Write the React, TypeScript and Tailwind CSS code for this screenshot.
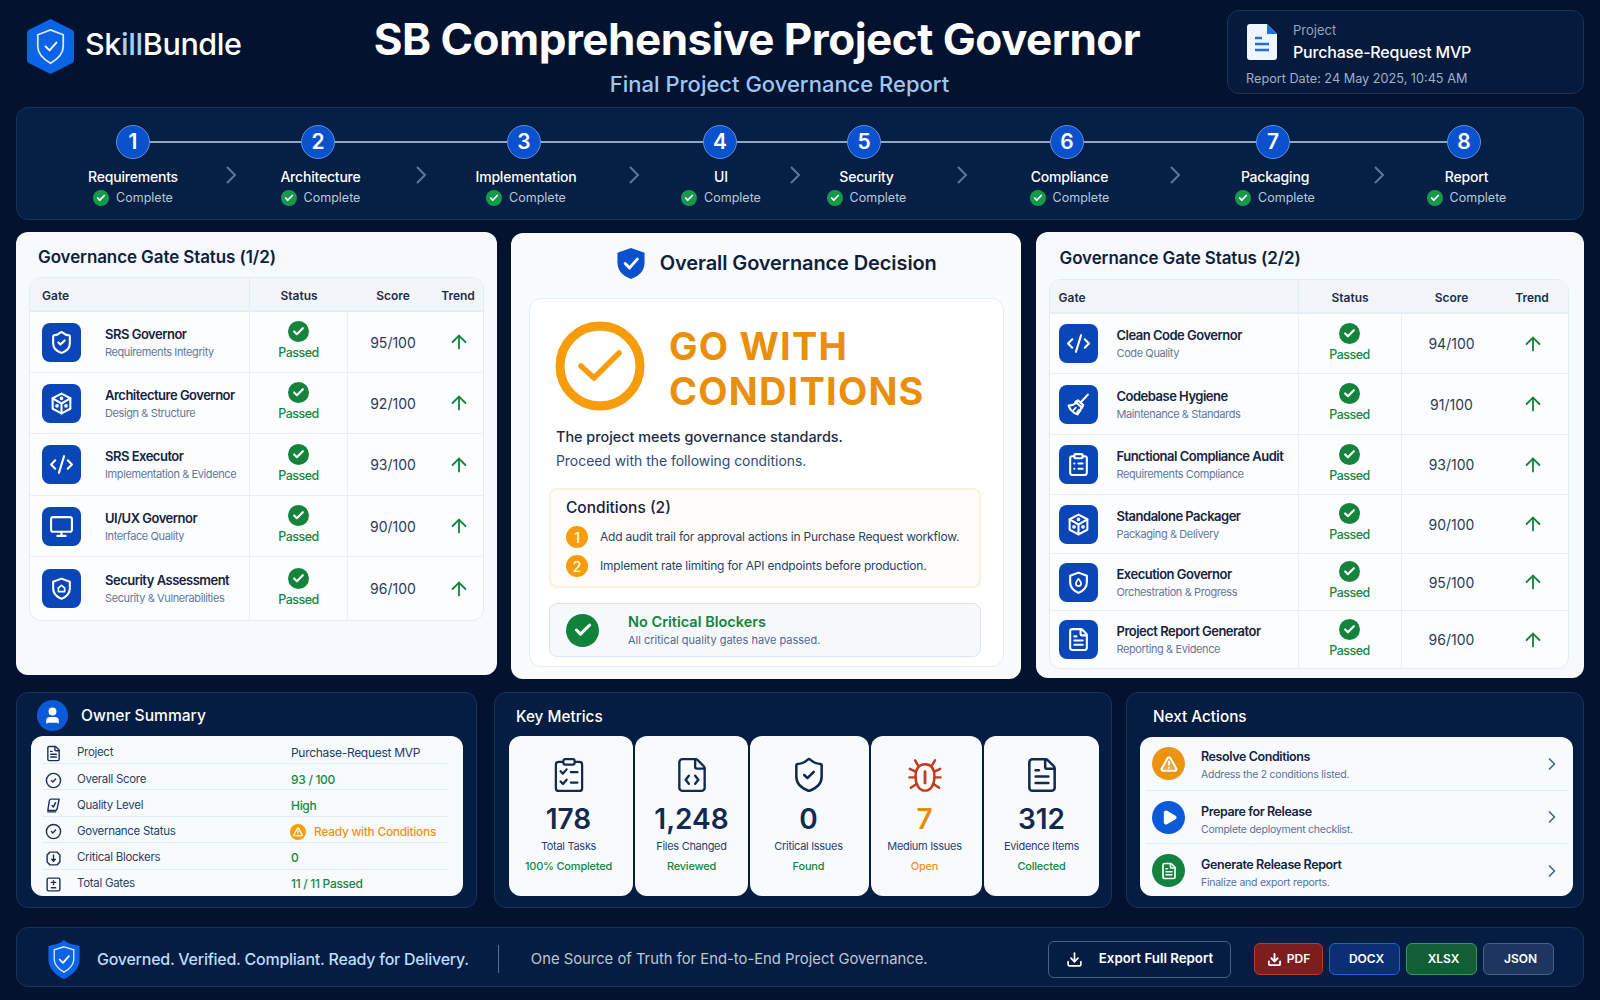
import * as React from "react";
import {
  ArrowUp,
  Check,
  ChevronRight,
  CircleCheck,
  CodeXml,
  Download,
  FileCode,
  FileText,
  Monitor,
  Play,
  ShieldCheck,
  TriangleAlert,
  User,
  ClipboardList,
} from "lucide-react";

type IconProps = { className?: string };

const Hex: React.FC<IconProps> = ({ className }) => (
  <svg viewBox="0 0 48 56" className={className}>
    <path d="M24 0 L46 11 Q48 12 48 14 V42 Q48 44 46 45 L24 56 L2 45 Q0 44 0 42 V14 Q0 12 2 11 Z" fill="#0b63e5" />
    <path d="M24 11 L37 16 V28 C37 36 31 41 24 45 C17 41 11 36 11 28 V16 Z" fill="none" stroke="#dbeafe" strokeWidth="1.8" />
    <path d="M19 28 L23 32 L30 24" fill="none" stroke="#fff" strokeWidth="2" strokeLinecap="round" strokeLinejoin="round" />
  </svg>
);

const Cube: React.FC<IconProps> = ({ className }) => (
  <svg viewBox="0 0 24 24" fill="none" stroke="currentColor" strokeWidth="2" strokeLinejoin="round" strokeLinecap="round" className={className}>
    <path d="M12 2.5 L20.5 7 V17 L12 21.5 L3.5 17 V7 Z" />
    <path d="M3.5 7 L12 12 L20.5 7 M12 12 V21.5" />
    <circle cx="7.7" cy="14.2" r="0.8" fill="currentColor" />
    <circle cx="16.3" cy="14.2" r="0.8" fill="currentColor" />
    <circle cx="12" cy="7" r="0.8" fill="currentColor" />
  </svg>
);

const ShieldHome: React.FC<IconProps> = ({ className }) => (
  <svg viewBox="0 0 24 24" fill="none" stroke="currentColor" strokeWidth="2" strokeLinejoin="round" strokeLinecap="round" className={className}>
    <path d="M12 2.5 L20 5.5 V12 C20 17 16.5 20 12 22 C7.5 20 4 17 4 12 V5.5 Z" />
    <path d="M9 15 V11.5 L12 9 L15 11.5 V15 Z" strokeWidth="1.6" />
  </svg>
);

const ShieldDrop: React.FC<IconProps> = ({ className }) => (
  <svg viewBox="0 0 24 24" fill="none" stroke="currentColor" strokeWidth="2" strokeLinejoin="round" strokeLinecap="round" className={className}>
    <path d="M12 2.5 L20 5.5 V12 C20 17 16.5 20 12 22 C7.5 20 4 17 4 12 V5.5 Z" />
    <path d="M12 8.5 C13.5 10.5 14.5 11.5 14.5 13 A2.5 2.5 0 0 1 9.5 13 C9.5 11.5 10.5 10.5 12 8.5 Z" strokeWidth="1.6" />
  </svg>
);

const Broom: React.FC<IconProps> = ({ className }) => (
  <svg viewBox="0 0 24 24" fill="none" stroke="currentColor" strokeWidth="2" strokeLinejoin="round" strokeLinecap="round" className={className}>
    <path d="M21 2.5 L14 10" />
    <path d="M11.5 8 L16.5 12.5 L15.5 15 L9 9.5 Z" />
    <path d="M10 10 C8 12 5.5 13 2.5 13 C3.5 16.5 7 20 11 21.5 C13 19.5 14.5 17 15 14.5" />
    <path d="M7 17.5 L9.5 15 M10.5 19.5 L12.5 17" strokeWidth="1.6" />
  </svg>
);

const Checklist: React.FC<IconProps> = ({ className }) => (
  <svg viewBox="0 0 32 38" fill="none" stroke="currentColor" strokeWidth="2.4" strokeLinecap="round" strokeLinejoin="round" className={className}>
    <rect x="2" y="5" width="28" height="31" rx="3" />
    <rect x="10" y="2" width="12" height="6" rx="2" fill="#fff" />
    <path d="M7 15 L9.5 17.5 L13.5 13 M7 26 L9.5 28.5 L13.5 24 M18 16 H25 M18 27 H25" />
  </svg>
);

const BugIcon: React.FC<IconProps> = ({ className }) => (
  <svg viewBox="0 0 36 38" fill="none" stroke="currentColor" strokeWidth="2.6" strokeLinecap="round" strokeLinejoin="round" className={className}>
    <path d="M18 7 C25 7 28 12 28 20 C28 29 24 35 18 35 C12 35 8 29 8 20 C8 12 11 7 18 7 Z" />
    <path d="M18 15 V27" strokeWidth="3" />
    <path d="M11 9 L7.5 3 M25 9 L28.5 3 M8 15 L2 12 M28 15 L34 12 M8 21 H1.5 M28 21 H34.5 M9 28 L3 32 M27 28 L33 32" />
  </svg>
);

const DocSolid: React.FC<IconProps> = ({ className }) => (
  <svg viewBox="0 0 30 36" className={className}>
    <path d="M3 0 H20 L30 10 V33 Q30 36 27 36 H3 Q0 36 0 33 V3 Q0 0 3 0 Z" fill="#eff6ff" />
    <path d="M20 0 L30 10 H20 Z" fill="#1d6fe8" />
    <path d="M8 14 H15 M8 20 H22 M8 26 H22" stroke="#1d6fe8" strokeWidth="2.4" />
  </svg>
);

const QualityIcon: React.FC<IconProps> = ({ className }) => (
  <svg viewBox="0 0 24 24" fill="none" stroke="currentColor" strokeWidth="2" strokeLinecap="round" strokeLinejoin="round" className={className}>
    <path d="M8 3 H20 L17 17 Q16.5 19 14 19 H4 L6 6 Q6.5 3 8 3 Z" />
    <path d="M4 21 H15 M10 12 L12 14 L15 8" />
  </svg>
);

const BlockerIcon: React.FC<IconProps> = ({ className }) => (
  <svg viewBox="0 0 24 24" fill="none" stroke="currentColor" strokeWidth="2" strokeLinecap="round" strokeLinejoin="round" className={className}>
    <path d="M7 3 H17 L21 7 V17 L17 21 H7 L3 17 V7 Z" />
    <path d="M12 7 V16 M9.5 13 L12 16 L14.5 13" />
  </svg>
);

const GatesIcon: React.FC<IconProps> = ({ className }) => (
  <svg viewBox="0 0 24 24" fill="none" stroke="currentColor" strokeWidth="2" strokeLinecap="round" strokeLinejoin="round" className={className}>
    <rect x="3" y="3" width="18" height="18" rx="2" />
    <path d="M12 6.5 V12 M9 9 H15 M9 16.5 H15" />
  </svg>
);

const steps = [
  { n: 1, label: "Requirements", w: "w-[180px]", chev: "ml-[2px]", shift: "" },
  { n: 2, label: "Architecture", w: "w-[162px]", chev: "ml-[16px]", shift: "ml-[5px]" },
  { n: 3, label: "Implementation", w: "w-[194px]", chev: "ml-[7px]", shift: "ml-[4px]" },
  { n: 4, label: "UI", w: "w-[130px] ml-[15px]", chev: "ml-[4px]", shift: "ml-[2px]" },
  { n: 5, label: "Security", w: "w-[126px]", chev: "ml-[29px]", shift: "ml-[5px]" },
  { n: 6, label: "Compliance", w: "w-[198px]", chev: "ml-[3px]", shift: "ml-[5px]" },
  { n: 7, label: "Packaging", w: "w-[184px]", chev: "ml-[8px]", shift: "ml-[4px]" },
  { n: 8, label: "Report", w: "w-[158px]", chev: "", shift: "ml-[5px]" },
];

type Gate = {
  icon: React.ReactNode;
  name: string;
  sub: string;
  score: string;
  h: string;
};

const iconCls = "size-[25px]";

const gatesOne: Gate[] = [
  { icon: <ShieldCheck className={iconCls} />, name: "SRS Governor", sub: "Requirements Integrity", score: "95/100", h: "h-[61px]" },
  { icon: <Cube className={iconCls} />, name: "Architecture Governor", sub: "Design & Structure", score: "92/100", h: "h-[61px]" },
  { icon: <CodeXml className={iconCls} />, name: "SRS Executor", sub: "Implementation & Evidence", score: "93/100", h: "h-[62px]" },
  { icon: <Monitor className={iconCls} />, name: "UI/UX Governor", sub: "Interface Quality", score: "90/100", h: "h-[61px]" },
  { icon: <ShieldHome className={iconCls} />, name: "Security Assessment", sub: "Security & Vulnerabilities", score: "96/100", h: "h-[63px]" },
];

const gatesTwo: Gate[] = [
  { icon: <CodeXml className={iconCls} />, name: "Clean Code Governor", sub: "Code Quality", score: "94/100", h: "h-[60px]" },
  { icon: <Broom className={iconCls} />, name: "Codebase Hygiene", sub: "Maintenance & Standards", score: "91/100", h: "h-[61px]" },
  { icon: <ClipboardList className={iconCls} />, name: "Functional Compliance Audit", sub: "Requirements Compliance", score: "93/100", h: "h-[60px]" },
  { icon: <Cube className={iconCls} />, name: "Standalone Packager", sub: "Packaging & Delivery", score: "90/100", h: "h-[59px]" },
  { icon: <ShieldDrop className={iconCls} />, name: "Execution Governor", sub: "Orchestration & Progress", score: "95/100", h: "h-[57px]" },
  { icon: <FileText className={iconCls} />, name: "Project Report Generator", sub: "Reporting & Evidence", score: "96/100", h: "h-[57px]" },
];

const GateTable: React.FC<{ rows: Gate[]; cols: string; lead: string; gap: string; width: string }> = ({
  rows,
  cols,
  lead,
  gap,
  width,
}) => (
  <div className={`${width} rounded-xl border border-[#e3ebf4] bg-white/70 overflow-hidden`}>
    <div className={`grid ${cols} h-[34px] items-center bg-[#f2f6fb] border-b-2 border-[#e6edf5] text-[12px] font-semibold text-[#1f2d4a]`}>
      <div className={`${lead} h-full pt-[3px] flex items-center border-r border-[#e3ebf4]`}>Gate</div>
      <div className="text-center pt-[3px]">Status</div>
      <div className="text-center pt-[3px] pr-[2px]">Score</div>
      <div className="text-center pt-[3px] pr-[7px]">Trend</div>
    </div>
    {rows.map((r, i) => (
      <div key={r.name} className={`grid ${cols} ${r.h} ${i < rows.length - 1 ? "border-b border-[#e8eff6]" : ""} items-center`}>
        <div className={`${lead} h-full flex items-center ${gap} border-r border-[#e8eff6]`}>
          <div className="size-[39px] shrink-0 rounded-lg bg-[#0b46b8] text-white flex items-center justify-center">{r.icon}</div>
          <div className="min-w-0">
            <div className="text-[13px] leading-[20px] font-semibold text-[#16233f] whitespace-nowrap tracking-[-0.5px]">{r.name}</div>
            <div className="text-[11px] leading-[17px] text-[#64779a] whitespace-nowrap tracking-[-0.4px]">{r.sub}</div>
          </div>
        </div>
        <div className="h-full flex flex-col items-center justify-center border-r border-[#e8eff6]">
          <div className="size-[21px] rounded-full bg-[#14833b] flex items-center justify-center">
            <Check className="size-[13px] text-white" strokeWidth={4} />
          </div>
          <div className="mt-px text-[12.5px] leading-[20px] font-medium text-[#16863f] tracking-[-0.5px]">Passed</div>
        </div>
        <div className="text-center text-[14px] text-[#2a3a58] pr-[2px]">{r.score}</div>
        <div className="flex justify-center pr-[6px]">
          <ArrowUp className="size-[22px] text-[#14833b]" strokeWidth={2} />
        </div>
      </div>
    ))}
  </div>
);

const owner = [
  { icon: <FileText className="size-[17px]" />, label: "Project", value: <span className="text-[#243a63]">Purchase-Request MVP</span>, h: "h-[28px] pt-[7px]" },
  { icon: <CircleCheck className="size-[17px]" />, label: "Overall Score", value: <span className="text-[#16863f] font-medium">93 / 100</span>, h: "h-[26px] pt-[7px]" },
  { icon: <QualityIcon className="size-[17px]" />, label: "Quality Level", value: <span className="text-[#16863f] font-medium">High</span>, h: "h-[27px] pt-[5px]" },
  {
    icon: <CircleCheck className="size-[17px]" />,
    label: "Governance Status",
    value: (
      <span className="flex items-center gap-[8px] text-[#ee9215] font-medium -ml-[1px]">
        <span className="size-[16px] rounded-full bg-[#f59e0b] flex items-center justify-center">
          <TriangleAlert className="size-[10px] text-white" strokeWidth={3} />
        </span>
        Ready with Conditions
      </span>
    ),
    h: "h-[26px] pt-[4px]",
  },
  { icon: <BlockerIcon className="size-[17px]" />, label: "Critical Blockers", value: <span className="text-[#16863f] font-medium">0</span>, h: "h-[27px] pt-[4px]" },
  { icon: <GatesIcon className="size-[17px]" />, label: "Total Gates", value: <span className="text-[#16863f] font-medium">11 / 11 Passed</span>, h: "h-[26px] pt-[2px]" },
];

const metrics = [
  { icon: <Checklist className="h-[36px] w-[30px] text-[#13294f]" />, n: "178", label: "Total Tasks", sub: "100% Completed", w: "w-[124px] pr-[5px]", nc: "text-[#13294f]", sc: "text-[#16863f]" },
  { icon: <FileCode className="size-[38px] text-[#13294f]" strokeWidth={1.5} />, n: "1,248", label: "Files Changed", sub: "Reviewed", w: "w-[113px]", nc: "text-[#13294f]", sc: "text-[#16863f]" },
  { icon: <ShieldCheck className="size-[38px] text-[#13294f]" strokeWidth={1.6} />, n: "0", label: "Critical Issues", sub: "Found", w: "w-[119px] pr-[2px]", nc: "text-[#13294f]", sc: "text-[#16863f]" },
  { icon: <BugIcon className="h-[37px] w-[34px] text-[#c23c1e]" />, n: "7", label: "Medium Issues", sub: "Open", w: "w-[111px] pr-[4px]", nc: "text-[#e98c0c]", sc: "text-[#ee9215]" },
  { icon: <FileText className="size-[38px] text-[#13294f]" strokeWidth={1.6} />, n: "312", label: "Evidence Items", sub: "Collected", w: "w-[115px]", nc: "text-[#13294f]", sc: "text-[#16863f]" },
];

const actions = [
  {
    icon: <TriangleAlert className="size-[18px] text-white fill-white/20" strokeWidth={2.6} />,
    bg: "bg-[#ec930f]",
    name: "Resolve Conditions",
    sub: "Address the 2 conditions listed.",
    h: "h-[54px]",
    pad: "pt-[2px]",
  },
  {
    icon: <Play className="size-[17px] text-white fill-white ml-[2px]" />,
    bg: "bg-[#0b5bd8]",
    name: "Prepare for Release",
    sub: "Complete deployment checklist.",
    h: "h-[53px]",
    pad: "pt-[5px]",
  },
  {
    icon: <FileText className="size-[18px] text-white" strokeWidth={2.2} />,
    bg: "bg-[#12833f]",
    name: "Generate Release Report",
    sub: "Finalize and export reports.",
    h: "h-[53px]",
    pad: "pt-[4px]",
  },
];

const panel = "rounded-xl border border-[#1b3358] bg-[#051d42]";

const App: React.FC = () => {
  return (
    <div className="w-[1600px] h-[1000px] overflow-hidden px-4 bg-[#03122e] font-['Inter',sans-serif]">
      {/* HEADER */}
      <div className="h-[107px] flex items-start">
        <div className="w-[271px] flex items-center pl-[11px] pt-[19px]">
          <Hex className="w-[47px] h-[55px]" />
          <div className="ml-[11px] mb-[5px] text-[30.5px] font-medium tracking-[-0.4px] text-white">
            Sk<span className="text-[#a9cdf5]">ill</span>Bundle
          </div>
        </div>
        <div className="w-[940px] text-center pt-[13px]">
          <div className="text-[44px] leading-[52px] font-bold tracking-[-0.5px] text-white">SB Comprehensive Project Governor</div>
          <div className="mt-[4px] pl-[45px] text-[22px] leading-[30px] font-medium text-[#9cc6f3]">Final Project Governance Report</div>
        </div>
        <div className="mt-[10px] w-[357px] h-[84px] rounded-xl border border-[#1b3358] bg-[#051a3c] pl-[18px] pt-[9px]">
          <div className="flex items-start">
            <DocSolid className="w-[30px] h-[36px] ml-[1px] mt-[4px]" />
            <div className="ml-[16px]">
              <div className="text-[13px] leading-[20px] text-[#93a5bf]">Project</div>
              <div className="text-[16px] leading-[24px] font-medium text-white tracking-[-0.2px]">Purchase-Request MVP</div>
            </div>
          </div>
          <div className="mt-[6px] text-[12.7px] leading-[18px] text-[#9fb0c8]">Report Date: 24 May 2025, 10:45 AM</div>
        </div>
      </div>

      {/* STEPPER */}
      <div className={`${panel} relative h-[113px] pl-[26px] pt-[17px] bg-[#061f45]`}>
        <div className="absolute left-[117px] w-[1331px] top-[33px] h-[2px] bg-[#93a5c0]" />
        <div className="flex items-start">
          {steps.map((s) => (
            <React.Fragment key={s.n}>
              <div className={`${s.w} shrink-0 flex flex-col items-center relative`}>
                <div className="size-[34px] rounded-full bg-[#0b50cc] border border-[#5b8fe0] flex items-center justify-center text-[21px] font-semibold text-white">
                  {s.n}
                </div>
                <div className={`${s.shift} mt-[8px] text-[14px] leading-[20px] font-medium text-white tracking-[-0.2px]`}>{s.label}</div>
                <div className={`${s.shift} mt-[1px] flex items-center gap-[7px] text-[12.5px] leading-[20px] text-[#bac7d9]`}>
                  <span className="size-[16px] rounded-full bg-[#17994a] flex items-center justify-center">
                    <Check className="size-[10px] text-white" strokeWidth={4} />
                  </span>
                  Complete
                </div>
              </div>
              {s.chev && (
                <svg viewBox="0 0 12 18" className={`${s.chev} w-[12px] h-[18px] mt-[41px] shrink-0 text-[#5f7699]`} fill="none" stroke="currentColor" strokeWidth="2">
                  <path d="M2 1 L10 9 L2 17" />
                </svg>
              )}
            </React.Fragment>
          ))}
        </div>
      </div>

      {/* MAIN */}
      <div className="mt-[12px] h-[447px] flex items-start">
        <div className="w-[481px] h-[443px] rounded-xl bg-[#f6f9fd] px-[13px] pt-[11px]">
          <div className="ml-[9px] text-[17px] leading-[28px] font-semibold text-[#101e3b] tracking-[-0.1px]">Governance Gate Status (1/2)</div>
          <div className="mt-[6px]">
            <GateTable rows={gatesOne} width="w-[455px]" cols="grid-cols-[220px_98px_92px_43px]" lead="pl-[12px]" gap="gap-[24px]" />
          </div>
        </div>

        <div className="ml-[14px] mt-px w-[510px] h-[446px] rounded-xl bg-[#f9fbfe] pt-[14px]">
          <div className="flex items-center justify-center h-[31px] gap-[15px] pl-[22px] pt-[1px]">
            <svg viewBox="0 0 28 32" className="w-[28px] h-[31px]">
              <path d="M14 0 L28 5 V15 C28 24 22 29 14 32 C6 29 0 24 0 15 V5 Z" fill="#0b50cc" />
              <path d="M8 16 L12.5 20.5 L20.5 11.5" fill="none" stroke="#fff" strokeWidth="3" strokeLinecap="round" strokeLinejoin="round" />
            </svg>
            <div className="text-[20px] font-semibold text-[#101e3b] tracking-[-0.1px]">Overall Governance Decision</div>
          </div>
          <div className="mt-[20px] ml-[18px] w-[475px] h-[369px] rounded-xl border border-[#e4ecf4] bg-white px-[19px] pt-[22px]">
            <div className="ml-[6px] flex items-center h-[90px]">
              <svg viewBox="0 0 90 90" className="size-[90px] shrink-0">
                <circle cx="45" cy="45" r="40" fill="none" stroke="#f79d0c" strokeWidth="9" />
                <path d="M26 45 L39 57 L64 32" fill="none" stroke="#f79d0c" strokeWidth="5.5" strokeLinecap="round" strokeLinejoin="round" />
              </svg>
              <div className="ml-[24px] text-[38px] leading-[45px] font-bold text-[#e8900c] tracking-[1.2px] pt-[6px]">
                GO WITH
                <br />
                CONDITIONS
              </div>
            </div>
            <div className="ml-[7px] mt-[14px] text-[14.4px] leading-[24px] font-medium text-[#1b2a48]">The project meets governance standards.</div>
            <div className="ml-[7px] text-[13.9px] leading-[24px] text-[#2f4a78]">Proceed with the following conditions.</div>
            <div className="mt-[15px] w-[432px] h-[100px] rounded-lg border-2 border-[#fdf0de] bg-[#fffdfa] pl-[15px] pt-[6px]">
              <div className="text-[15.5px] leading-[24px] font-medium text-[#14233f]">Conditions (2)</div>
              <div className="mt-[5px] flex items-center h-[24px] gap-[12px] text-[12px] text-[#2a3f68] whitespace-nowrap tracking-[-0.2px]">
                <span className="size-[22px] shrink-0 rounded-full bg-[#f79d0c] flex items-center justify-center text-white text-[14px] font-medium">1</span>
                Add audit trail for approval actions in Purchase Request workflow.
              </div>
              <div className="mt-[5px] flex items-center h-[24px] gap-[12px] text-[12px] text-[#2a3f68] whitespace-nowrap tracking-[-0.2px]">
                <span className="size-[22px] shrink-0 rounded-full bg-[#f79d0c] flex items-center justify-center text-white text-[14px] font-medium">2</span>
                Implement rate limiting for API endpoints before production.
              </div>
            </div>
            <div className="mt-[15px] w-[432px] h-[54px] rounded-lg border border-[#dbe5f0] bg-[#f6f9fc] flex items-center pl-[16px]">
              <span className="size-[33px] rounded-full bg-[#118239] flex items-center justify-center">
                <Check className="size-[20px] text-white" strokeWidth={3.6} />
              </span>
              <div className="ml-[29px]">
                <div className="text-[14.5px] leading-[21px] font-semibold text-[#14833b]">No Critical Blockers</div>
                <div className="text-[11px] leading-[17px] text-[#52678c]">All critical quality gates have passed.</div>
              </div>
            </div>
          </div>
        </div>

        <div className="ml-[15px] w-[549px] h-[446px] rounded-xl bg-[#f6f9fd] px-[13px] pt-[12px]">
          <div className="ml-[11px] text-[17px] leading-[28px] font-semibold text-[#101e3b] tracking-[-0.1px]">Governance Gate Status (2/2)</div>
          <div className="mt-[7px]">
            <GateTable rows={gatesTwo} width="w-[520px]" cols="grid-cols-[249px_103px_102px_64px]" lead="pl-[9px]" gap="gap-[19px]" />
          </div>
        </div>
      </div>

      {/* BOTTOM */}
      <div className="mt-[13px] h-[216px] flex">
        <div className={`${panel} w-[461px] pl-[14px] pt-[7px]`}>
          <div className="flex items-center h-[31px] ml-[6px]">
            <div className="size-[31px] rounded-full bg-[#0b5bd8] flex items-center justify-center">
              <User className="size-[19px] text-white fill-white" />
            </div>
            <div className="ml-[13px] text-[15.6px] font-medium text-white">Owner Summary</div>
          </div>
          <div className="mt-[5px] w-[432px] h-[160px] rounded-xl bg-[#f8fbfe] overflow-hidden">
            {owner.map((o, i) => (
              <div
                key={o.label}
                className={`mx-[11px] w-[405px] ${o.h} grid grid-cols-[35px_214px_1fr] items-center ${i < owner.length - 1 ? "border-b border-[#e3ebf5]" : ""}`}
              >
                <div className="pl-[3px] text-[#1c2f57]">{o.icon}</div>
                <div className="text-[11.5px] tracking-[-0.3px] text-[#2a3f68]">{o.label}</div>
                <div className="text-[12px] tracking-[-0.3px] whitespace-nowrap">{o.value}</div>
              </div>
            ))}
          </div>
        </div>

        <div className={`${panel} ml-[17px] w-[618px] pl-[14px] pt-[11px]`}>
          <div className="ml-[7px] text-[15.3px] leading-[26px] font-medium text-white">Key Metrics</div>
          <div className="mt-[6px] flex gap-[2px]">
            {metrics.map((m) => (
              <div key={m.label} className={`${m.w} h-[160px] rounded-xl bg-[#f8fbfe] flex flex-col items-center pt-[20px]`}>
                <div className="h-[38px] flex items-center justify-center">{m.icon}</div>
                <div className={`mt-[7px] text-[28px] leading-[36px] font-semibold ${m.nc}`}>{m.n}</div>
                <div className="text-[11px] leading-[18px] text-[#2a3f68] whitespace-nowrap tracking-[-0.3px]">{m.label}</div>
                <div className={`mt-[2px] text-[11px] leading-[18px] font-medium whitespace-nowrap tracking-[-0.2px] ${m.sc}`}>{m.sub}</div>
              </div>
            ))}
          </div>
        </div>

        <div className={`${panel} ml-[14px] w-[458px] pl-[13px] pt-[11px]`}>
          <div className="ml-[13px] text-[15.3px] leading-[26px] font-medium text-white">Next Actions</div>
          <div className="mt-[7px] w-[433px] h-[159px] rounded-xl bg-[#f8fbfe] overflow-hidden">
            {actions.map((a, i) => (
              <div key={a.name} className={`${a.h} mx-[6px] flex items-center pl-[6px] pr-[5px] ${i < actions.length - 1 ? "border-b border-[#e3ebf5]" : ""}`}>
                <div className={`size-[33px] rounded-full ${a.bg} flex items-center justify-center shrink-0`}>{a.icon}</div>
                <div className={`ml-[16px] flex-1 ${a.pad}`}>
                  <div className="text-[12.5px] leading-[19px] font-semibold text-[#14233f] tracking-[-0.4px]">{a.name}</div>
                  <div className="text-[10.5px] leading-[17px] text-[#5a7097] tracking-[-0.25px]">{a.sub}</div>
                </div>
                <ChevronRight className="size-[20px] text-[#4a6288]" />
              </div>
            ))}
          </div>
        </div>
      </div>

      {/* FOOTER */}
      <div className={`${panel} mt-[19px] h-[60px] pt-[4px] flex items-center`}>
        <svg viewBox="0 0 32 40" className="ml-[31px] w-[32px] h-[39px] shrink-0">
          <path d="M16 0 C20 4 26 5 32 6 V20 C32 29 25 36 16 40 C7 36 0 29 0 20 V6 C6 5 12 4 16 0 Z" fill="#0b63e5" />
          <path d="M16 7 L26 10 V20 C26 26 21 30 16 33 C11 30 6 26 6 20 V10 Z" fill="none" stroke="#dbeafe" strokeWidth="1.4" />
          <path d="M11.5 20 L15 23.5 L21 16.5" fill="none" stroke="#fff" strokeWidth="1.8" strokeLinecap="round" strokeLinejoin="round" />
        </svg>
        <div className="ml-[17px] text-[16px] font-medium text-[#bcdcfb] whitespace-nowrap tracking-[-0.25px]">Governed. Verified. Compliant. Ready for Delivery.</div>
        <div className="ml-[29px] w-px h-[28px] bg-[#5a6e8d]" />
        <div className="ml-[32px] text-[14.8px] text-[#bcc7d6] whitespace-nowrap">One Source of Truth for End-to-End Project Governance.</div>
        <div className="ml-auto mr-[29px] flex items-center">
          <div className="w-[183px] h-[37px] rounded-md border border-[#4a5f82] flex items-center justify-center gap-[16px] text-[13.3px] font-semibold text-white">
            <Download className="size-[17px]" strokeWidth={2.4} />
            Export Full Report
          </div>
          <div className="ml-[23px] flex gap-[6px] text-[12px] font-semibold text-white">
            <div className="w-[69px] h-[32px] rounded-md border border-[#c2382c] bg-[#7d1d1d] flex items-center justify-center gap-[5px]">
              <Download className="size-[15px]" strokeWidth={3} />
              PDF
            </div>
            <div className="w-[71px] h-[32px] rounded-md border border-[#1d63d8] bg-[#0c2f73] flex items-center justify-center pl-[4px]">DOCX</div>
            <div className="w-[71px] h-[32px] rounded-md border border-[#2d9a5a] bg-[#125f36] flex items-center justify-center pl-[4px]">XLSX</div>
            <div className="w-[71px] h-[32px] rounded-md border border-[#495f8a] bg-[#1e3560] flex items-center justify-center pl-[4px]">JSON</div>
          </div>
        </div>
      </div>
    </div>
  );
};

export default App;
